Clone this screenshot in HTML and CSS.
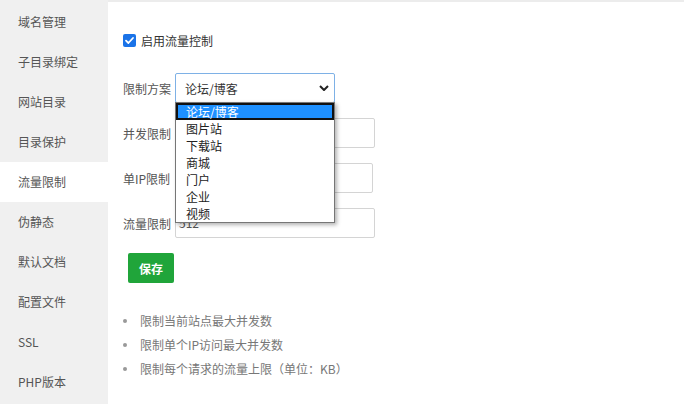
FILE: index.html
```html
<!DOCTYPE html>
<html lang="zh-CN">
<head>
<meta charset="utf-8">
<title>流量限制</title>
<link rel="stylesheet" href="styles.css">
</head>
<body>
<div class="layout">
  <aside class="sidebar">
    <div class="nav-item">域名管理</div>
    <div class="nav-item">子目录绑定</div>
    <div class="nav-item">网站目录</div>
    <div class="nav-item">目录保护</div>
    <div class="nav-item active">流量限制</div>
    <div class="nav-item">伪静态</div>
    <div class="nav-item">默认文档</div>
    <div class="nav-item">配置文件</div>
    <div class="nav-item">SSL</div>
    <div class="nav-item">PHP版本</div>
  </aside>
  <main class="main">
    <label class="check-row">
      <span class="checkbox"><svg width="13" height="13" viewBox="0 0 13 13"><path d="M3 6.6 L5.4 9 L10 4" fill="none" stroke="#fff" stroke-width="1.8" stroke-linecap="round" stroke-linejoin="round"/></svg></span>
      <span class="check-text">启用流量控制</span>
    </label>
    <div class="form-row">
      <span class="label">限制方案</span>
      <div class="select">
        <span class="select-value">论坛/博客</span>
        <svg class="chevron" width="10" height="6" viewBox="0 0 10 6"><path d="M1 1 L5 5 L9 1" fill="none" stroke="#222" stroke-width="2" stroke-linejoin="round"/></svg>
        <ul class="dropdown">
          <li class="opt selected">论坛/博客</li>
          <li class="opt">图片站</li>
          <li class="opt">下载站</li>
          <li class="opt">商城</li>
          <li class="opt">门户</li>
          <li class="opt">企业</li>
          <li class="opt">视频</li>
        </ul>
      </div>
    </div>
    <div class="form-row">
      <span class="label">并发限制</span>
      <div class="input"></div>
    </div>
    <div class="form-row">
      <span class="label">单IP限制</span>
      <div class="input narrow"></div>
    </div>
    <div class="form-row">
      <span class="label">流量限制</span>
      <div class="input">512</div>
    </div>
    <button class="btn-save">保存</button>
    <ul class="tips">
      <li>限制当前站点最大并发数</li>
      <li>限制单个IP访问最大并发数</li>
      <li>限制每个请求的流量上限（单位：KB）</li>
    </ul>
  </main>
</div>
</body>
</html>
```
FILE: styles.css
```css
* { box-sizing: border-box; }
html, body { margin: 0; padding: 0; background: #fff; }
body {
  font-family: "Noto Sans CJK SC", "Microsoft YaHei", sans-serif;
  font-size: 12px;
  color: #555;
}
.layout {
  display: flex;
  height: 404px;
}
.sidebar {
  width: 108px;
  flex: none;
  background: #f0f0f0;
  padding-top: 2px;
}
.nav-item {
  height: 40px;
  line-height: 40px;
  padding-left: 18px;
  color: #555;
}
.nav-item.active { background: #fff; }

.main {
  flex: 1;
  border-top: 2px solid #ececec;
  padding: 28px 0 0 15px;
}
.check-row {
  display: flex;
  align-items: center;
  height: 20px;
  gap: 5px;
  color: #333;
}
.checkbox {
  width: 13px;
  height: 13px;
  border-radius: 2px;
  background: #1a73e8;
  display: flex;
}
.form-row {
  display: flex;
  align-items: center;
  height: 30px;
  margin-top: 15px;
}
.check-row + .form-row { margin-top: 23px; }
.label {
  width: 52px;
  flex: none;
  color: #555;
}
.select {
  position: relative;
  width: 160px;
  height: 30px;
  border: 1px solid #7eb1e6;
  border-radius: 2px;
  display: flex;
  align-items: center;
  padding: 0 5px 0 9px;
  color: #333;
}
.select-value { flex: 1; }
.chevron { flex: none; }
.dropdown {
  position: absolute;
  top: 100%;
  left: -1px;
  width: 160px;
  margin: 0;
  padding: 0;
  list-style: none;
  background: #fff;
  border: 1px solid #767676;
  box-shadow: 2px 2px 4px rgba(0,0,0,0.3);
  z-index: 5;
}
.opt {
  height: 17px;
  line-height: 17px;
  padding-left: 10px;
  color: #222;
}
.opt.selected {
  background: #1e90ff;
  color: #fff;
  border: 2px solid #111;
  line-height: 13px;
  padding-left: 8px;
}
.input {
  width: 200px;
  height: 30px;
  border: 1px solid #d4d4d4;
  border-radius: 2px;
  padding: 0 3px;
  line-height: 28px;
  color: #555;
}
.input.narrow { width: 198px; }
.btn-save {
  display: block;
  margin: 15px 0 0 5px;
  width: 46px;
  height: 30px;
  border: none;
  border-radius: 2px;
  background: #20a53a;
  color: #fff;
  font-family: inherit;
  font-size: 12px;
  font-weight: bold;
  padding: 0;
}
.tips {
  list-style: none;
  margin: 26px 0 0;
  padding: 0;
}
.tips li {
  position: relative;
  line-height: 24px;
  padding-left: 17px;
  color: #777;
}
.tips li::before {
  content: "";
  position: absolute;
  left: 0;
  top: 10px;
  width: 4px;
  height: 4px;
  border-radius: 50%;
  background: #999;
}
```
